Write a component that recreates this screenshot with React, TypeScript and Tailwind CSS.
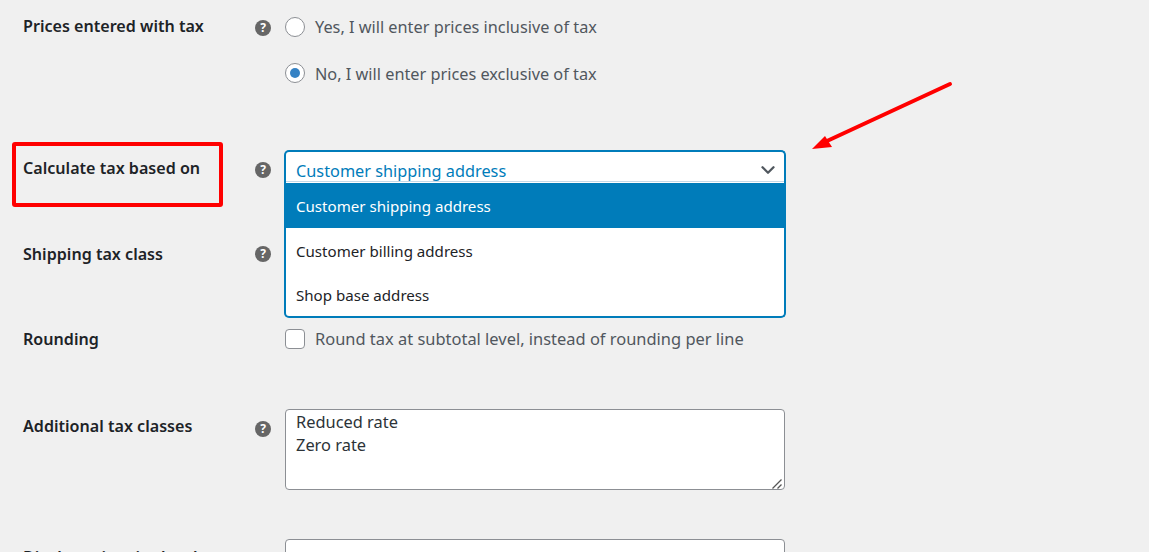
import { ChevronDown } from 'lucide-react';

const fontStack = 'font-["Noto_Sans",sans-serif]';

function HelpIcon() {
  return (
    <div className="w-4 h-4 rounded-full bg-[#666666] text-white flex items-center justify-center text-[12px] font-bold leading-none">
      ?
    </div>
  );
}

function Radio({ checked, label, className }: { checked?: boolean; label: string; className?: string }) {
  return (
    <div className="flex items-center h-5 gap-[10px]">
      <div className="w-5 h-5 rounded-full border border-[#8c8f94] bg-white flex items-center justify-center">
        {checked && <div className="w-[10px] h-[10px] rounded-full bg-[#3582c4]" />}
      </div>
      <span className={`text-[16.3px] text-[#50575e] ${className ?? ''}`}>{label}</span>
    </div>
  );
}

function Label({ text, className }: { text: string; className: string }) {
  return <div className={`text-[16.1px] leading-5 font-semibold text-[#1d2327] ${className}`}>{text}</div>;
}

export default function App() {
  return (
    <div className={`relative h-[552px] overflow-hidden bg-[#f0f0f0] ${fontStack}`}>
      {/* prices entered with tax */}
      <div className="flex pl-[23px] pt-[17px]">
        <Label text="Prices entered with tax" className="w-[232px] -mt-px" />
        <div className="w-[30px] pt-[3px]">
          <HelpIcon />
        </div>
        <div className="flex flex-col gap-[26px]">
          <Radio label="Yes, I will enter prices inclusive of tax" />
          <Radio checked label="No, I will enter prices exclusive of tax" className="pt-0.5" />
        </div>
      </div>

      {/* calculate tax based on */}
      <div className="flex pl-[23px] mt-[67px]">
        <Label text="Calculate tax based on" className="w-[232px] mt-2" />
        <div className="w-[29px] pt-3">
          <HelpIcon />
        </div>
        <div className="relative w-[502px] h-[33px] bg-white border-2 border-b-0 border-[#007cba] rounded-t-[5px] pl-[10px] flex items-center justify-between">
          <span className="text-[16.3px] text-[#007cba] pt-[7px]">Customer shipping address</span>
          <ChevronDown className="w-[22px] h-[22px] mr-[5px] mt-1 text-[#50575e]" strokeWidth={2.5} />
          <div className="absolute left-0 right-0 bottom-px h-px bg-[#c5d9e8]" />
          <div className="absolute -left-0.5 -right-0.5 top-[31px] z-10 h-[135px] bg-white border-2 border-t-0 border-[#007cba] rounded-b-[5px] text-[15.1px] text-[#1d2327]">
            <div className="h-[45px] bg-[#007cba] text-white pl-[10px] pt-px flex items-center">Customer shipping address</div>
            <div className="h-[44px] pl-[10px] pt-[3px] flex items-center">Customer billing address</div>
            <div className="h-[44px] pl-[10px] pt-[3px] flex items-center">Shop base address</div>
          </div>
        </div>
      </div>

      {/* shipping tax class */}
      <div className="flex pl-[23px] mt-[61px]">
        <Label text="Shipping tax class" className="w-[232px]" />
        <div className="w-[30px] pt-0.5">
          <HelpIcon />
        </div>
      </div>

      {/* rounding */}
      <div className="flex pl-[23px] mt-[65px]">
        <Label text="Rounding" className="w-[262px]" />
        <div className="flex items-center h-5 gap-[10px]">
          <div className="w-5 h-5 rounded-[4px] border border-[#8c8f94] bg-white" />
          <span className="text-[16.45px] text-[#50575e]">Round tax at subtotal level, instead of rounding per line</span>
        </div>
      </div>

      {/* additional tax classes */}
      <div className="flex pl-[23px] mt-[60px]">
        <Label text="Additional tax classes" className="w-[232px] mt-[7px]" />
        <div className="w-[30px] pt-3">
          <HelpIcon />
        </div>
        <div className="relative w-[500px] h-[81px]">
          <textarea
            readOnly
            className="block w-full h-full resize-none bg-white border border-[#8c8f94] rounded-[4px] px-[10px] text-[16.4px] leading-[23px] text-[#2c3338] outline-none"
            defaultValue={'Reduced rate\nZero rate'}
          />
          <svg className="absolute right-0 bottom-0" width="14" height="12" viewBox="0 0 14 12">
            <path d="M1.5 10.5 L10.5 1.5 M6.5 10.5 L10.5 6.5" stroke="#555555" strokeWidth="1.3" fill="none" />
          </svg>
        </div>
      </div>

      {/* display prices in the shop */}
      <div className="flex pl-[23px] mt-[49px]">
        <Label text="Display prices in the shop" className="w-[262px] mt-2" />
        <div className="w-[500px] h-8 bg-white border border-[#8c8f94] rounded-t-[4px] pl-[10px] pt-[6px] text-[16.4px] text-[#2c3338]">
          Excluding tax
        </div>
      </div>

      {/* annotations */}
      <div className="absolute left-3 top-[142px] w-[211px] h-[65px] border-4 border-[#ff0000] rounded-[3px]" />
      <svg className="absolute left-[800px] top-[70px]" width="160" height="90" viewBox="0 0 160 90">
        <path d="M150 14 L27 71" stroke="#ff0000" strokeWidth="4" strokeLinecap="round" fill="none" />
        <path d="M12 79 L25 66 L32 77 Z" fill="#ff0000" />
      </svg>
    </div>
  );
}
